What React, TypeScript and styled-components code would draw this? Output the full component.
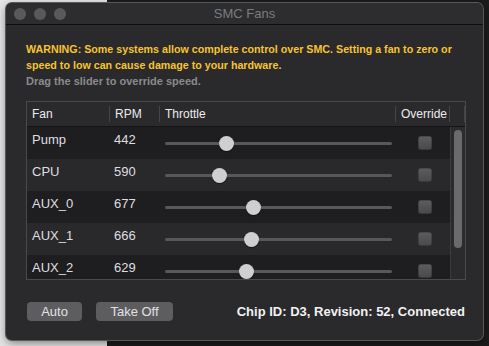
import * as React from "react";
import styled, { createGlobalStyle } from "styled-components";

const GlobalStyle = createGlobalStyle`
  html, body {
    margin: 0;
    padding: 0;
    width: 489px;
    height: 346px;
    overflow: hidden;
    background: linear-gradient(to right, #e4e4e4 0 107px, #1b1b1c 107px);
    font-family: "Liberation Sans", Arial, sans-serif;
  }
`;

const Desk = styled.div`
  padding: 3px 0 0 6px;
`;

const Window = styled.div`
  width: 477px;
  height: 337px;
  background: #2a2a2c;
  border-radius: 6px;
  box-shadow: 0 0 0 1px #58585a, 0 3px 8px rgba(0, 0, 0, 0.45);
  overflow: hidden;
  display: flex;
  flex-direction: column;
`;

const TitleBar = styled.div`
  height: 21px;
  border-bottom: 1px solid #0d0d0e;
  background: #2d2d2f;
  display: flex;
  align-items: center;
  padding-left: 8px;
  position: relative;
`;

const Lights = styled.div`
  display: flex;
  gap: 8px;
`;

const Light = styled.span`
  width: 12px;
  height: 12px;
  border-radius: 50%;
  background: #59595b;
`;

const Title = styled.div`
  position: absolute;
  left: 0;
  right: 0;
  text-align: center;
  font-size: 13px;
  color: #7c7c7e;
`;

const Body = styled.div`
  padding: 16px 17px 0 20px;
  display: flex;
  flex-direction: column;
`;

const Warning = styled.div`
  color: #f7c430;
  font-weight: bold;
  font-size: 10.7px;
  line-height: 16px;
`;

const Hint = styled.div`
  color: #8a8a8c;
  font-weight: bold;
  font-size: 11px;
  line-height: 16px;
`;

const Table = styled.div`
  margin-top: 12px;
  height: 177px;
  border: 1px solid #4a4a4c;
  display: flex;
  flex-direction: column;
  overflow: hidden;
`;

const Header = styled.div`
  display: grid;
  grid-template-columns: 83px 50px 236px 54px 15px 1fr;
  height: 24px;
  border-bottom: 1px solid #141415;
  flex: none;
`;

const HeadCell = styled.div<{ $last?: boolean }>`
  display: flex;
  align-items: center;
  padding-left: 5px;
  font-size: 12px;
  font-weight: 500;
  color: #ececee;
  position: relative;
  &::after {
    content: "";
    display: ${({ $last }) => ($last ? "none" : "block")};
    position: absolute;
    right: 0;
    top: 4px;
    bottom: 4px;
    width: 1px;
    background: #454547;
  }
`;

const Grid = styled.div`
  flex: 1;
  display: flex;
  overflow: hidden;
`;

const Rows = styled.div`
  width: 423px;
  display: flex;
  flex-direction: column;
`;

const Row = styled.div<{ $odd: boolean }>`
  flex: none;
  height: 32px;
  display: grid;
  grid-template-columns: 83px 50px 236px 54px;
  background: ${({ $odd }) => ($odd ? "#29292b" : "#1e1e20")};
`;

const Cell = styled.div`
  padding: 4px 0 0 5px;
  font-size: 13px;
  line-height: 17px;
  color: #dedee0;
`;

const NumCell = styled(Cell)`
  padding-left: 4px;
`;

const SliderCell = styled.div`
  display: flex;
  align-items: center;
  padding: 0 4px 0 5px;
`;

const Track = styled.div`
  position: relative;
  flex: 1;
  height: 3px;
  border-radius: 2px;
  background: #58585a;
`;

const Thumb = styled.span`
  position: absolute;
  top: -6px;
  width: 15px;
  height: 15px;
  margin-left: -7.5px;
  border-radius: 50%;
  background: #cfcfd1;
  box-shadow: 0 1px 1px rgba(0, 0, 0, 0.4);
`;

const CheckCell = styled.div`
  display: flex;
  align-items: center;
  justify-content: center;
  padding-left: 3px;
`;

const Check = styled.span`
  width: 14px;
  height: 14px;
  border-radius: 3px;
  background: linear-gradient(#5d5d60, #48484b);
  box-shadow: inset 0 0 0 0.5px rgba(0, 0, 0, 0.4);
`;

const ScrollTrack = styled.div`
  flex: 1;
  border-left: 1px solid #3b3b3d;
  background: #2b2b2d;
  padding: 3px 0 0 3px;
`;

const ScrollThumb = styled.div`
  width: 8px;
  height: 118px;
  border-radius: 4px;
  background: #6a6a6c;
`;

const Footer = styled.div`
  margin-top: 22px;
  display: flex;
  align-items: center;
  padding-left: 1px;
`;

const Button = styled.button<{ $w: number }>`
  width: ${({ $w }) => $w}px;
  height: 19px;
  margin-right: 14px;
  border: none;
  border-radius: 4px;
  background: #5d5d60;
  color: #e2e2e4;
  font-family: inherit;
  font-size: 13px;
  padding: 0;
  line-height: 19px;
`;

const Status = styled.div`
  margin-left: auto;
  margin-right: 1px;
  color: #f2f2f2;
  font-weight: bold;
  font-size: 13px;
`;

const fans = [
  { name: "Pump", rpm: 442, pos: 0.272 },
  { name: "CPU", rpm: 590, pos: 0.239 },
  { name: "AUX_0", rpm: 677, pos: 0.388 },
  { name: "AUX_1", rpm: 666, pos: 0.379 },
  { name: "AUX_2", rpm: 629, pos: 0.359 },
];

export default function App() {
  return (
    <Desk>
      <GlobalStyle />
      <Window>
        <TitleBar>
          <Lights>
            <Light />
            <Light />
            <Light />
          </Lights>
          <Title>SMC Fans</Title>
        </TitleBar>
        <Body>
          <Warning>
            WARNING: Some systems allow complete control over SMC. Setting a fan to zero or
            <br />
            speed to low can cause damage to your hardware.
          </Warning>
          <Hint>Drag the slider to override speed.</Hint>
          <Table>
            <Header>
              <HeadCell>Fan</HeadCell>
              <HeadCell>RPM</HeadCell>
              <HeadCell>Throttle</HeadCell>
              <HeadCell>Override</HeadCell>
              <HeadCell />
              <HeadCell $last />
            </Header>
            <Grid>
              <Rows>
                {fans.map(({ name, rpm, pos }, index) => (
                  <Row key={name} $odd={index % 2 === 1}>
                    <Cell>{name}</Cell>
                    <NumCell>{rpm}</NumCell>
                    <SliderCell>
                      <Track>
                        <Thumb style={{ left: `${pos * 100}%` }} />
                      </Track>
                    </SliderCell>
                    <CheckCell>
                      <Check />
                    </CheckCell>
                  </Row>
                ))}
              </Rows>
              <ScrollTrack>
                <ScrollThumb />
              </ScrollTrack>
            </Grid>
          </Table>
          <Footer>
            <Button $w={55}>Auto</Button>
            <Button $w={77}>Take Off</Button>
            <Status>Chip ID: D3, Revision: 52, Connected</Status>
          </Footer>
        </Body>
      </Window>
    </Desk>
  );
}
